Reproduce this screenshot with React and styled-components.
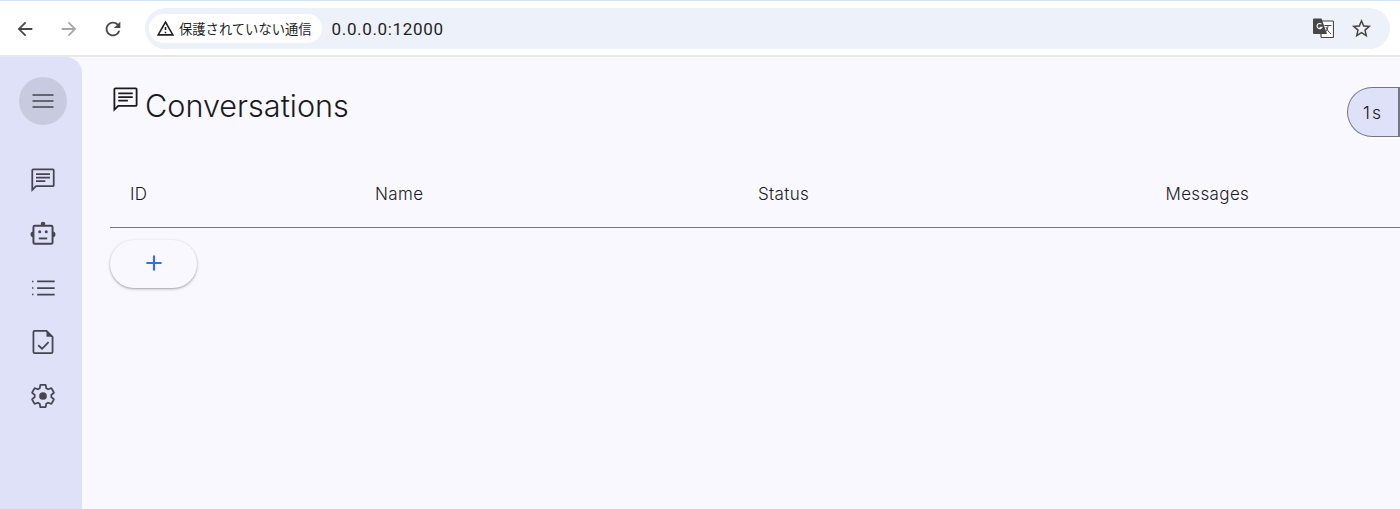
import React from 'react'
import styled, { createGlobalStyle } from 'styled-components'
import {
  MdArrowBack,
  MdArrowForward,
  MdRefresh,
  MdOutlineWarningAmber,
  MdOutlineStarBorder,
  MdAdd,
} from 'react-icons/md'

const Global = createGlobalStyle`
  html, body { margin:0; padding:0; height:100%; background:#faf8ff; overflow:hidden; }
  #root { height:100%; }
  * { box-sizing:border-box; }
`

const Page = styled.div`
  width:1400px;
  height:509px;
  display:flex;
  flex-direction:column;
  overflow:hidden;
  font-family:Inter,"Noto Sans CJK JP",sans-serif;
`
const Chrome = styled.header`
  height:57px;
  flex:none;
  display:flex;
  align-items:center;
  gap:14px;
  padding:0 10px 0 7px;
  background:#fff;
  border-top:1px solid #d3e3fd;
  border-bottom:2px solid #e9e9e9;
`
const NavButtons = styled.div`
  display:flex;
  gap:8px;
  margin-top:2px;
`
const NavButton = styled.span`
  width:36px;
  height:36px;
  display:flex;
  align-items:center;
  justify-content:center;
  color:${p => (p.$off ? '#a4a6a9' : '#474747')};
`
const Omnibox = styled.div`
  flex:1;
  height:41px;
  border-radius:21px;
  background:#ecf1fa;
  display:flex;
  align-items:center;
  padding:0 17px 0 4px;
`
const Security = styled.div`
  height:29px;
  padding:0 10px 0 7px;
  border-radius:15px;
  background:#fff;
  display:flex;
  align-items:center;
  gap:4px;
  font-size:13.3px;
  color:#1f1f1f;
  font-family:"Noto Sans CJK JP",sans-serif;
`
const Url = styled.span`
  margin-left:10px;
  padding-top:1px;
  font-size:17px;
  color:#1f1f1f;
  font-family:Roboto,sans-serif;
  letter-spacing:.65px;
  flex:1;
`
const BarIcons = styled.div`
  display:flex;
  align-items:center;
  gap:16px;
  color:#474747;
`
const Body = styled.div`
  flex:1;
  display:flex;
  min-height:0;
`
const Rail = styled.nav`
  width:82px;
  flex:none;
  background:#dfe1f9;
  border-top-right-radius:16px;
  display:flex;
  flex-direction:column;
  align-items:center;
  padding-top:20px;
`
const MenuButton = styled.button`
  width:48px;
  height:48px;
  border:0;
  padding:0;
  border-radius:50%;
  background:#c8cae0;
  display:flex;
  align-items:center;
  justify-content:center;
  margin:0 0 28px 4px;
`
const RailItem = styled.a`
  width:56px;
  height:54px;
  margin-left:4px;
  display:flex;
  align-items:center;
  justify-content:center;
  color:#44464f;
`
const Main = styled.main`
  flex:1;
  min-width:0;
  padding:28px 0 0 28px;
  overflow:hidden;
`
const TitleRow = styled.div`
  display:flex;
  justify-content:space-between;
  align-items:flex-start;
  height:75px;
`
const Title = styled.h1`
  margin:0;
  display:flex;
  align-items:flex-start;
  gap:6px;
  font-size:30.6px;
  line-height:42px;
  font-weight:300;
  color:#1a1b20;
  svg { flex:none; margin-left:1px; margin-right:-1px; }
`
const Segment = styled.div`
  width:53px;
  height:50px;
  margin-top:2px;
  flex:none;
  background:#dfe1f9;
  border:1px solid #757780;
  border-right-width:2px;
  border-radius:25px 0 0 25px;
  display:flex;
  align-items:center;
  justify-content:center;
  font-size:17.5px;
  font-weight:300;
  letter-spacing:2px;
  color:#1a1b20;
`
const HeadRow = styled.div`
  height:68px;
  display:grid;
  grid-template-columns:245px 383px 407.5px 1fr;
  align-items:center;
  padding-left:20px;
  border-bottom:1px solid #75777f;
  font-size:17px;
  letter-spacing:.35px;
  font-weight:300;
  color:#1a1b20;
`
const AddButton = styled.button`
  display:flex;
  align-items:center;
  justify-content:center;
  width:87px;
  height:48px;
  margin-top:12px;
  padding:0 0 2px;
  border:0;
  border-radius:24px;
  background:#faf8ff;
  color:#2f6fef;
  box-shadow:0 1px 3px rgba(0,0,0,.3),0 1px 1px rgba(0,0,0,.08);
`

function Glyph({ size = 28, children }) {
  return (
    <svg width={size} height={size} viewBox="0 0 24 24" fill="none" stroke="currentColor" strokeWidth="1.5">
      {children}
    </svg>
  )
}

function ChatGlyph({ size }) {
  return (
    <Glyph size={size}>
      <path d="M2.8 20.4V3.6a.8.8 0 0 1 .8-.8h16.8a.8.8 0 0 1 .8.8v12.8a.8.8 0 0 1-.8.8H6z" />
      <path d="M6 7h12M6 10h12M6 13h8" />
    </Glyph>
  )
}

function RobotGlyph() {
  return (
    <Glyph>
      <rect x="3.8" y="5" width="16.4" height="15.4" rx="1.2" strokeWidth="1.7" />
      <circle cx="12" cy="3.3" r="1.9" fill="currentColor" stroke="none" />
      <path d="M3.8 9.8a2.5 2.5 0 0 0 0 5zM20.2 9.8a2.5 2.5 0 0 1 0 5z" fill="currentColor" stroke="none" />
      <circle cx="9.2" cy="10" r="1.3" fill="currentColor" stroke="none" />
      <circle cx="14.8" cy="10" r="1.3" fill="currentColor" stroke="none" />
      <path d="M8.4 15.8h7.2" strokeWidth="1.6" />
    </Glyph>
  )
}

function ListGlyph() {
  return (
    <Glyph>
      <path d="M7 6.4h15M7 12h15M7 17.6h15" />
      <path d="M2.6 6.4h1.2M2.6 12h1.2M2.6 17.6h1.2" strokeWidth="1.3" />
    </Glyph>
  )
}

function TaskGlyph() {
  return (
    <Glyph>
      <path d="M15 2.4H4.8a1 1 0 0 0-1 1v17.2a1 1 0 0 0 1 1h14.4a1 1 0 0 0 1-1V7.6z" strokeWidth="1.5" />
      <path d="M15 2.4l5.2 5.2H15z" fill="currentColor" stroke="none" />
      <path d="M7.9 14.8l3.3 3 5.6-5.6" strokeWidth="1.5" />
    </Glyph>
  )
}

function GearGlyph() {
  return (
    <Glyph>
      <path d="M19.14 12.94c.04-.3.06-.61.06-.94 0-.32-.02-.64-.07-.94l2.03-1.58a.49.49 0 0 0 .12-.61l-1.92-3.32a.488.488 0 0 0-.59-.22l-2.39.96c-.5-.38-1.03-.7-1.62-.94l-.36-2.54a.484.484 0 0 0-.48-.41h-3.84c-.24 0-.43.17-.47.41l-.36 2.54c-.59.24-1.13.57-1.62.94l-2.39-.96c-.22-.08-.47 0-.59.22L2.74 8.87c-.12.21-.08.47.12.61l2.03 1.58c-.05.3-.09.63-.09.94s.02.64.07.94l-2.03 1.58a.49.49 0 0 0-.12.61l1.92 3.32c.12.22.37.29.59.22l2.39-.96c.5.38 1.03.7 1.62.94l.36 2.54c.05.24.24.41.48.41h3.84c.24 0 .44-.17.47-.41l.36-2.54c.59-.24 1.13-.56 1.62-.94l2.39.96c.22.08.47 0 .59-.22l1.92-3.32c.12-.22.07-.47-.12-.61l-2.01-1.58z" />
      <circle cx="12" cy="12" r="3.3" fill="currentColor" stroke="none" />
    </Glyph>
  )
}

function MenuGlyph() {
  return (
    <svg width="24" height="24" viewBox="0 0 24 24" fill="none" stroke="#44464f" strokeWidth="1.6">
      <path d="M1.5 6h21M1.5 12h21M1.5 18h21" />
    </svg>
  )
}

function TranslateGlyph() {
  return (
    <svg width="22" height="22" viewBox="0 0 22 22">
      <rect x="9" y="4" width="12.5" height="16.5" rx="1" fill="#fff" stroke="#474747" strokeWidth="1.2" />
      <path d="M1 2.5a1 1 0 0 1 1-1h7.5L15 17H2a1 1 0 0 1-1-1z" fill="#474747" />
      <path d="M9.5 7.2a2.6 2.6 0 1 0 .4 3.2H7.6" fill="none" stroke="#fff" strokeWidth="1.1" />
      <path d="M12.5 8.5h7M16 8.5c0 3.5-1.5 6-3.5 7M14 10c.8 2.4 2.5 5 5 7" fill="none" stroke="#474747" strokeWidth="1" />
    </svg>
  )
}

const railIcons = [ChatGlyph, RobotGlyph, ListGlyph, TaskGlyph, GearGlyph]
const columns = ['ID', 'Name', 'Status', 'Messages']

export default function App() {
  return (
    <Page>
      <Global />
      <Chrome>
        <NavButtons>
          <NavButton><MdArrowBack size={22} /></NavButton>
          <NavButton $off><MdArrowForward size={22} /></NavButton>
          <NavButton><MdRefresh size={22} /></NavButton>
        </NavButtons>
        <Omnibox>
          <Security>
            <MdOutlineWarningAmber size={19} />
            保護されていない通信
          </Security>
          <Url>0.0.0.0:12000</Url>
          <BarIcons>
            <TranslateGlyph />
            <MdOutlineStarBorder size={23} />
          </BarIcons>
        </Omnibox>
      </Chrome>
      <Body>
        <Rail>
          <MenuButton><MenuGlyph /></MenuButton>
          {railIcons.map((Icon, i) => (
            <RailItem key={i}><Icon /></RailItem>
          ))}
        </Rail>
        <Main>
          <TitleRow>
            <Title><ChatGlyph size={29} />Conversations</Title>
            <Segment>1s</Segment>
          </TitleRow>
          <HeadRow>
            {columns.map(c => <span key={c}>{c}</span>)}
          </HeadRow>
          <AddButton><MdAdd size={26} /></AddButton>
        </Main>
      </Body>
    </Page>
  )
}
